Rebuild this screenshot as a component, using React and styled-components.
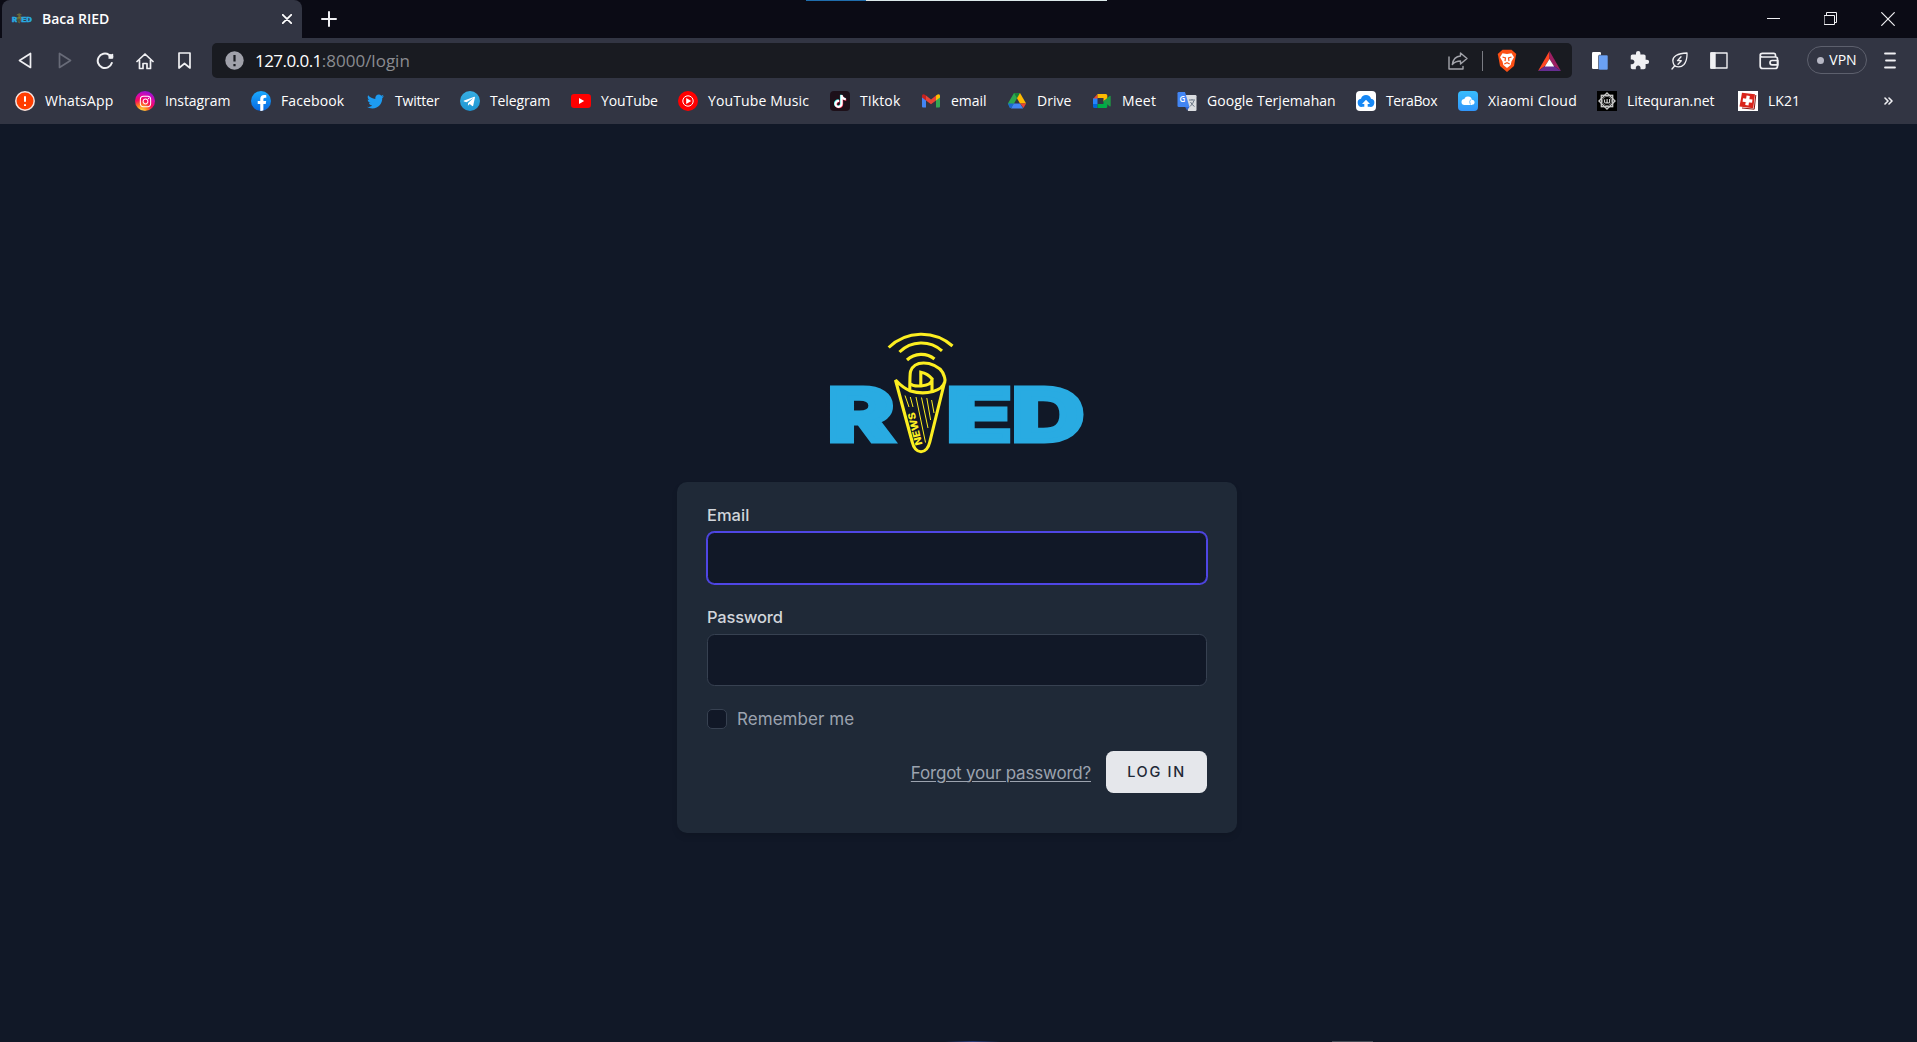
import React from 'react';
import styled, { createGlobalStyle } from 'styled-components';
import { FaTwitter, FaFacebookF, FaTelegramPlane, FaInstagram, FaTiktok } from 'react-icons/fa';
import { MdExtension } from 'react-icons/md';

const ui = '"Open Sans", "Noto Sans", sans-serif';

const GlobalStyle = createGlobalStyle`
  *, *::before, *::after { box-sizing: border-box; }
  body { margin: 0; background: #111827; overflow: hidden; }
`;

const Browser = styled.div`
  display: flex;
  flex-direction: column;
  width: 100%;
  height: 100vh;
  position: relative;
  font-family: ${ui};
  color: #fff;
`;

/* ---------- window chrome ---------- */

const TabStrip = styled.div`
  display: flex;
  height: 38px;
  padding-left: 2px;
  background: #0b0b15;
`;

const Tab = styled.div`
  display: flex;
  align-items: center;
  width: 300px;
  padding: 0 10px 0 10px;
  border-radius: 8px 8px 0 0;
  background: #323543;
`;

const TabTitle = styled.span`
  flex: 1;
  margin-left: 10px;
  font-size: 14px;
  font-weight: 600;
  line-height: 20px;
`;

const Favicon = styled.svg`
  width: 20px;
  height: 12px;
  overflow: visible;
`;

const IconCell = styled.div`
  display: flex;
  flex: none;
  align-items: center;
  justify-content: center;
  width: ${(p) => p.$w || 40}px;
  color: ${(p) => p.$color || '#f0f0f3'};
`;

const Spacer = styled.div`
  flex: 1;
`;

const WindowControls = styled.div`
  display: flex;
  align-items: stretch;
`;

const StripEdge = styled.div`
  position: absolute;
  top: 0;
  left: 806px;
  display: flex;
  height: 1px;
`;

const EdgePart = styled.div`
  width: ${(p) => p.$w}px;
  background: ${(p) => p.$color};
`;

const Toolbar = styled.div`
  display: flex;
  height: 44px;
  padding: 5px 7px 4px 5px;
  background: #323543;
`;

const AddressBar = styled.div`
  display: flex;
  flex: none;
  align-items: center;
  width: 1360px;
  margin: 0 8px 0 7px;
  padding: 0 0 0 13px;
  border-radius: 5px;
  background: #191b21;
`;

const Url = styled.div`
  flex: 1;
  margin-left: 11px;
  font-size: 17px;
  line-height: 24px;
  color: #8a8b90;
`;

const Host = styled.span`
  letter-spacing: -0.55px;
  color: #fff;
`;

const Divider = styled.div`
  width: 1px;
  height: 20px;
  margin: 0 4px;
  background: #7a7c83;
`;

const VpnPill = styled.div`
  display: flex;
  flex: none;
  align-items: center;
  justify-content: center;
  align-self: center;
  gap: 5px;
  width: 60px;
  height: 28px;
  margin: 0 3px 1px 8px;
  border: 1px solid #5d606d;
  border-radius: 14px;
  font-size: 14px;
  line-height: 20px;
`;

const VpnDot = styled.i`
  width: 7px;
  height: 7px;
  border-radius: 50%;
  background: #b6b7c4;
`;

const BookmarkBar = styled.div`
  display: flex;
  align-items: center;
  height: 42px;
  padding: 0 20px 4px 15px;
  background: #323543;
`;

const Bookmark = styled.div`
  display: flex;
  flex: none;
  align-items: center;
  gap: 10px;
  width: ${(p) => p.$w}px;
  font-size: 14px;
  line-height: 20px;
  letter-spacing: ${(p) => p.$ls}px;
  white-space: nowrap;
`;

const Badge = styled.span`
  display: flex;
  flex: none;
  align-items: center;
  justify-content: center;
  width: 20px;
  height: 20px;
  overflow: hidden;
  border-radius: ${(p) => p.$r || '0'};
  background: ${(p) => p.$bg || 'none'};
  color: #fff;
`;

/* ---------- login page ---------- */

const Page = styled.main`
  display: flex;
  flex: 1;
  flex-direction: column;
  align-items: center;
  padding: 205px 3px 0 0;
  background: #111827;
  font-family: Inter, "Liberation Sans", sans-serif;
`;

const Logo = styled.svg`
  width: 260px;
  height: 127px;
  margin-bottom: 27px;
  overflow: visible;
`;

const Card = styled.form`
  width: 560px;
  height: 351px;
  margin-top: -1px;
  padding: 20px 30px;
  border-radius: 10px;
  background: #1f2937;
  box-shadow: 0 4px 7px -1px rgba(0, 0, 0, 0.12);
`;

const Field = styled.div`
  display: flex;
  flex-direction: column;
  gap: 4px;
  height: 82px;
  margin-bottom: 20px;
`;

const Label = styled.label`
  padding-top: 1px;
  font-size: 16.5px;
  font-weight: 500;
  line-height: 25px;
  letter-spacing: ${(p) => p.$ls || 0}px;
  color: #d1d5db;
`;

const Input = styled.input`
  width: 100%;
  height: 52px;
  padding: 10px 15px;
  border: 1px solid ${(p) => (p.$active ? '#4f46e5' : '#374151')};
  border-radius: 7.5px;
  outline: none;
  background: #111827;
  box-shadow: ${(p) => (p.$active ? '0 0 0 1px #4f46e5' : 'none')};
  color: #d1d5db;
`;

const Remember = styled.label`
  display: flex;
  align-items: center;
  gap: 10px;
  height: 25px;
  font-size: 17px;
  letter-spacing: 0.05px;
  color: #9ca3af;
`;

const Check = styled.span`
  width: 20px;
  height: 20px;
  border: 1px solid #374151;
  border-radius: 5px;
  background: #111827;
`;

const Actions = styled.div`
  display: flex;
  align-items: center;
  justify-content: flex-end;
  gap: 15px;
  margin-top: 20px;
`;

const ForgotLink = styled.a`
  padding-top: 2px;
  font-size: 17px;
  line-height: 25px;
  letter-spacing: -0.2px;
  text-decoration: underline;
  text-decoration-thickness: 1px;
  text-underline-offset: 2px;
  color: #9ca3af;
`;

const Submit = styled.button`
  width: 101px;
  height: 42px;
  padding: 0;
  border: 0;
  border-radius: 7.5px;
  background: #e5e7eb;
  font: 500 14.5px/20px Inter, "Liberation Sans", sans-serif;
  letter-spacing: 1.7px;
  color: #1f2937;
`;

const BottomEdge = styled.div`
  position: absolute;
  bottom: 0;
  left: 1332px;
  width: 41px;
  height: 1px;
  background: #454a55;
`;

const BottomGlow = styled(BottomEdge)`
  left: 945px;
  width: 55px;
  background: linear-gradient(90deg, transparent, #2c3c78, transparent);
`;

/* ---------- drawings ---------- */

const Glyph = ({ w = 20, h = w, sw = 1.7, children }) => (
  <svg width={w} height={h} viewBox={`0 0 ${w} ${h}`} fill="none" stroke="currentColor" strokeWidth={sw} strokeLinecap="round" strokeLinejoin="round">
    {children}
  </svg>
);

const LogoShapes = ({ caption = true }) => (
  <>
    <g fill="#29abe2" stroke="#29abe2" strokeWidth="5" strokeMiterlimit="6" fontFamily="Inter, sans-serif" fontWeight="800" fontSize="73.3">
      <text transform="translate(827.8 441.1) scale(1.363 1)">R</text>
      <text transform="translate(946.5 441.1) scale(1.46 1)">E</text>
      <text transform="translate(1011.8 441.1) scale(1.368 1)">D</text>
    </g>
    <g fill="none" stroke="#fcee21" strokeWidth="3.1">
      <path d="M888.7 347.5A47 47 0 0 1 952.5 346" />
      <path d="M899.5 352A31 31 0 0 1 942 350.8" />
      <path d="M907 360A21 21 0 0 1 934.5 359" />
      <path d="M895.5 380L912.2 442Q914.5 451.5 921 451.7Q927.5 451.5 929.8 442L944.6 382Q943 388.5 933 391.5Q922 394.5 910.5 391Q903 388 895.5 380Z" />
      <path d="M944.6 383Q945.5 380 944.5 377Q942 367 929 363.5Q914 361 910.5 371.5Q909.8 374 909.8 391" />
      <path d="M910.5 383.5Q912 386.5 921 386Q932 385 932.2 379Q928 373.5 920.8 372.2V385.5M932 379V391.5" />
      <path strokeWidth="1" d="M905 395.5L909 407M910.3 397L913 407M916 397L925.5 442.5M921.5 397.5L928 428M926.8 398L930.6 420M931.6 400L934 413" />
    </g>
    {caption && (
      <text transform="translate(922.5 444.3) rotate(-104)" fill="#fcee21" fontFamily="Inter, sans-serif" fontWeight="800" fontSize="10" textLength="33.5" lengthAdjust="spacingAndGlyphs">
        NEWS
      </text>
    )}
  </>
);

const WarningIcon = () => (
  <svg width="20" height="20" viewBox="0 0 20 20">
    <circle cx="10" cy="10" r="9.2" fill="#ff3d00" stroke="#f6e5e0" strokeWidth="1.5" />
    <path d="M10 5.3v5.500M10 13.3v1.700" stroke="#fff" strokeWidth="2" />
  </svg>
);

const YouTubeIcon = () => (
  <svg width="20" height="20" viewBox="0 0 20 20">
    <rect y="3" width="20" height="14" rx="3.2" fill="#f00" />
    <path d="M8 7l5.200 3L8 13z" fill="#fff" />
  </svg>
);

const YouTubeMusicIcon = () => (
  <svg width="20" height="20" viewBox="0 0 20 20">
    <circle cx="10" cy="10" r="10" fill="#f00" />
    <circle cx="10" cy="10" r="5.2" fill="none" stroke="#fff" strokeWidth="1" />
    <path d="M8.200 7l5 3-5 3z" fill="#fff" />
  </svg>
);

const GmailIcon = () => (
  <svg width="20" height="20" viewBox="0 0 20 20">
    <path d="M1 5v10.500q0 1 1 1h3V8z" fill="#4285f4" />
    <path d="M19 5v10.500q0 1-1 1h-3V8z" fill="#34a853" />
    <path d="M15 4.600v4.900l4-3V5q0-2.500-2.400-1.600z" fill="#fbbc04" />
    <path d="M5 4.600v4.900L1 6.500V5q0-2.500 2.400-1.600z" fill="#c5221f" />
    <path d="M5 4.600l5 3.800 5-3.800v4.900l-5 3.800-5-3.800z" fill="#ea4335" />
  </svg>
);

const DriveIcon = () => (
  <svg width="20" height="20" viewBox="0 0 20 20">
    <path d="M7 2h6l-3 5.300-5 8.800-2 1L.9 12.500z" fill="#2da94f" />
    <path d="M7 2h6l-3 5.300z" fill="#188038" />
    <path d="M13 2l6.100 10.500H13L10 7.300z" fill="#ffba00" />
    <path d="M13 12.500h6.100L16.500 17z" fill="#ea4335" />
    <path d="M6.800 12.500H13l3.200 5H4z" fill="#4285f4" />
    <path d="M.9 12.500h5.900L4 17.300q-1 0-1.500-1z" fill="#1967d2" />
  </svg>
);

const MeetIcon = () => (
  <svg width="20" height="20" viewBox="0 0 20 20">
    <path d="M5.500 3v5H1z" fill="#ea4335" />
    <path d="M1 7.500h4.500v6H1z" fill="#2684fc" />
    <path d="M1 13h4.500v4H2.500Q1 17 1 15.500z" fill="#0066da" />
    <path d="M5.500 3h8.300q1.500 0 1.500 1.500V8l-3.800 2.500V7h-6z" fill="#ffba00" />
    <path d="M5.500 13h6v-3l3.800-2v7.500q0 1.500-1.500 1.500H5.500z" fill="#00ac47" />
    <path d="M11.500 10.200l6-5.300q1.200-.7 1.200.6v9.200q0 1.200-1.200.6z" fill="#1e9a45" />
  </svg>
);

const TranslateIcon = () => (
  <svg width="20" height="20" viewBox="0 0 20 20">
    <path d="M8 4h10.300q1.200 0 1.200 1.200v13.600q0 1.200-1.200 1.200H11z" fill="#dadce0" />
    <path d="M12 9h6M15 8v1M13 15.500q3-2.500 4-6M13.500 11q1.500 3 4 4.500" stroke="#6b7685" fill="none" />
    <path d="M1.800 1H8l4.500 15H1.800Q.5 16 .5 14.800V2.200Q.5 1 1.800 1z" fill="#4285f4" />
    <path d="M8.200 16h4.300L10 19.500z" fill="#3367d6" />
    <text x="2.500" y="11.300" fontSize="8" fontWeight="600" fontFamily="Open Sans, sans-serif" fill="#fff">G</text>
  </svg>
);

const TeraBoxIcon = () => (
  <svg width="20" height="20" viewBox="0 0 20 20">
    <path d="M6.500 15.800A4 4 0 0 1 5 7.800a5.200 5.200 0 0 1 10 0 4 4 0 0 1-1.500 8z" fill="#1788f5" />
    <path d="M10 8.700l4 4.300h-2.300v3.500H8.300V13H6z" fill="#fff" />
  </svg>
);

const XiaomiCloudIcon = () => (
  <svg width="20" height="20" viewBox="0 0 20 20" fill="#fff">
    <circle cx="6.500" cy="11" r="3" />
    <circle cx="10" cy="9.300" r="3.800" />
    <circle cx="14" cy="11.200" r="2.500" />
    <path d="M6 10h8v4H6z" />
    <path d="M12.700 8.500q-2 2-.3 5" stroke="#35a8fb" strokeWidth=".7" fill="none" />
  </svg>
);

const QuranIcon = () => (
  <svg width="20" height="20" viewBox="0 0 20 20" fill="none" stroke="#c9c9c9">
    <rect x="4.300" y="4.300" width="11.400" height="11.400" strokeWidth="1.300" />
    <rect x="4.300" y="4.300" width="11.400" height="11.400" strokeWidth="1.300" transform="rotate(45 10 10)" />
    <circle cx="10" cy="10" r="4.600" fill="#000" strokeWidth=".6" />
    <path d="M7.500 8.500v2q0 1.500 1.300 1.500t1.300-1.500v-2.500M10.100 10.500q0 1.500 1.300 1.500t1.200-1.500V8" strokeWidth="1.200" />
  </svg>
);

const CrossIcon = () => (
  <svg width="20" height="20" viewBox="0 0 20 20">
    <path d="M4 1.800l13 1.500-1.800 14L1.500 15.500z" fill="#d9241b" />
    <path d="M17.800 4l-1.600 14.200L4 17" stroke="#8d130e" fill="none" />
    <path d="M10.200 4.800l-1.300 9.500M4.800 9l9.500 1.200" stroke="#fff" strokeWidth="3.300" />
  </svg>
);

const bookmarks = [
  { label: 'WhatsApp', w: 120, ls: 0.2, icon: <Badge><WarningIcon /></Badge> },
  { label: 'Instagram', w: 116, ls: -0.08, icon: <Badge $r="50%" $bg="radial-gradient(circle at 30% 105%, #ffd44a 8%, #ff8a1e 25%, #f80a5a 48%, #d60bb0 68%, #7014e8 95%)"><FaInstagram size={13} /></Badge> },
  { label: 'Facebook', w: 114, ls: 0.1, icon: <Badge $r="50%" $bg="linear-gradient(#1aaaff, #0867e0)"><svg width="20" height="20"><FaFacebookF x="3" y="4" size={16} /></svg></Badge> },
  { label: 'Twitter', w: 95, ls: -0.2, icon: <Badge><FaTwitter size={17} color="#1d9bf0" /></Badge> },
  { label: 'Telegram', w: 111, ls: -0.12, icon: <Badge $r="50%" $bg="linear-gradient(#37aee2, #1e96d3)"><svg width="20" height="20"><FaTelegramPlane x="2.800" y="4" size={13} /></svg></Badge> },
  { label: 'YouTube', w: 107, ls: -0.1, icon: <Badge><YouTubeIcon /></Badge> },
  { label: 'YouTube Music', w: 152, ls: 0.13, icon: <Badge><YouTubeMusicIcon /></Badge> },
  { label: 'TIktok', w: 91, ls: 0.1, icon: <Badge $r="4px" $bg="#1d1019"><svg width="20" height="20"><FaTiktok x="3.100" y="3.600" size={13} color="#29e6e0" /><FaTiktok x="4.100" y="4.400" size={13} color="#fb2c55" /><FaTiktok x="3.600" y="4" size={13} /></svg></Badge> },
  { label: 'email', w: 86, ls: -0.05, icon: <Badge><GmailIcon /></Badge> },
  { label: 'Drive', w: 85, ls: 0, icon: <Badge><DriveIcon /></Badge> },
  { label: 'Meet', w: 85, ls: 0.2, icon: <Badge><MeetIcon /></Badge> },
  { label: 'Google Terjemahan', w: 179, ls: 0.04, icon: <Badge><TranslateIcon /></Badge> },
  { label: 'TeraBox', w: 102, ls: -0.4, icon: <Badge $r="4px" $bg="#fff"><TeraBoxIcon /></Badge> },
  { label: 'Xiaomi Cloud', w: 139, ls: 0.26, icon: <Badge $r="4px" $bg="linear-gradient(#38bdfc, #3095fa)"><XiaomiCloudIcon /></Badge> },
  { label: 'Litequran.net', w: 141, ls: -0.04, icon: <Badge $bg="#000"><QuranIcon /></Badge> },
  { label: 'LK21', w: 80, ls: 0, icon: <Badge $bg="#fff"><CrossIcon /></Badge> },
];

export default function App() {
  return (
    <Browser>
      <GlobalStyle />
      <TabStrip>
        <Tab>
          <Favicon viewBox="827 329 260 143"><LogoShapes caption={false} /></Favicon>
          <TabTitle>Baca RIED</TabTitle>
          <Glyph w={10} sw={1.8}><path d="M.8.8l8.400 8.400M9.200.8L.8 9.200" /></Glyph>
        </Tab>
        <IconCell $w={54}><Glyph w={16} sw={2}><path d="M8 1v14M1 8h14" /></Glyph></IconCell>
        <Spacer />
        <WindowControls>
          <IconCell $w={57}><Glyph w={13} sw={1}><path d="M0 5.500h13" /></Glyph></IconCell>
          <IconCell $w={57}><Glyph w={13} h={14} sw={1}><path d="M.5 3.500h10v9h-10zM2.500 3.500v-3h10v10h-2" /></Glyph></IconCell>
          <IconCell $w={58}><Glyph w={14} sw={1.2}><path d="M.7.700l12.600 12.600M13.300.700L.7 13.300" /></Glyph></IconCell>
        </WindowControls>
        <StripEdge>
          <EdgePart $w={60} $color="#1f6dac" />
          <EdgePart $w={241} $color="#dce9ea" />
        </StripEdge>
      </TabStrip>

      <Toolbar>
        <IconCell><Glyph w={14} h={17}><path d="M12.500 1.500v14L1.500 8.500z" /></Glyph></IconCell>
        <IconCell $color="#686b78"><Glyph w={14} h={17}><path d="M1.500 1.500v14l11-7z" /></Glyph></IconCell>
        <IconCell>
          <Glyph w={18} sw={2}>
            <path d="M13 2.900A7.200 7.200 0 1 0 15.800 11" />
            <circle cx="14.8" cy="4.3" r="2.3" fill="currentColor" stroke="none" />
            <path d="M13 6h3.500V2.500" strokeWidth="1.5" />
          </Glyph>
        </IconCell>
        <IconCell $w={39}><Glyph w={18}><path d="M1 9.500L9 2l8 7.500M3.500 8v8.500H7V11.500h4v5h3.500V8" /></Glyph></IconCell>
        <IconCell $w={41}><Glyph w={13} h={17}><path d="M1 1h11v15l-5.500-4.500L1 16z" /></Glyph></IconCell>
        <AddressBar>
          <svg width="19" height="19" viewBox="0 0 19 19">
            <circle cx="9.5" cy="9.5" r="9.2" fill="#a0a1aa" />
            <path d="M9.500 4v6.500M9.500 13v2.200" stroke="#191b21" strokeWidth="2.2" />
          </svg>
          <Url><Host>127.0.0.1</Host>:8000/login</Url>
          <IconCell $color="#a3a4ab">
            <Glyph w={20} h={18} sw={1.4}>
              <path d="M1 5v12h14v-2.500" />
              <path d="M12.500 1l6.500 5.500-6.500 5.500V9q-5 0-8.200 3.500Q5.500 4.500 12.500 4z" />
            </Glyph>
          </IconCell>
          <Divider />
          <IconCell>
            <svg width="20" height="23" viewBox="0 0 20 23">
              <path d="M10 .8L14.500.8 19.300 5l-.5 2L17 17l-7 6-7-6L1.200 7l-.5-2L5.500.8z" fill="#fb4f14" />
              <path d="M5.500 4.300l4.500.8 4.500-.8L17 8.300l-2.500 4.200-.8 3.500-3.700 3-3.700-3-.8-3.500L3 8.300z" fill="#fff" />
              <path d="M5.500 8l3 1-.5 3.200M14.500 8l-3 1 .5 3.200M7.300 15L10 13.700l2.700 1.300" fill="none" stroke="#fb4f14" strokeWidth="1.2" />
            </svg>
          </IconCell>
          <IconCell $w={45}>
            <svg width="23" height="20" viewBox="0 0 23 20">
              <path d="M11.500 0L0 20l7-5 4.500-7z" fill="#ff4724" />
              <path d="M11.500 0L23 20l-7-5-4.500-7z" fill="#9e1f63" />
              <path d="M0 20h23l-7-5H7z" fill="#662d91" />
              <path d="M11.500 8l4.700 7.500H6.800z" fill="#fff" />
            </svg>
          </IconCell>
        </AddressBar>
        <IconCell>
          <svg width="16" height="18" viewBox="0 0 16 18">
            <rect width="9" height="17" rx="1.2" fill="#fff" />
            <rect x="6.5" y="3" width="9.5" height="15" rx="1.2" fill="#6ba1f4" stroke="#323543" strokeWidth=".6" />
          </svg>
        </IconCell>
        <IconCell $w={39}><MdExtension size={21} /></IconCell>
        <IconCell>
          <Glyph w={17} h={18} sw={1.3}>
            <path d="M1 17l3-3.500M3.500 13.800Q-.5 7 5 3.500 9 1.200 16 1q.3 7.500-3 11.500-4 4-9.500 1.300z" />
            <path d="M10 4.800L6.500 8.700h3.800L7 12.200" />
          </Glyph>
        </IconCell>
        <IconCell>
          <Glyph w={18} h={17} sw={1.4}>
            <path d="M1 1h16v15H1z" />
            <path d="M1 1h4v15H1z" fill="currentColor" />
          </Glyph>
        </IconCell>
        <IconCell $w={60}>
          <Glyph w={20} h={18}>
            <path d="M1.200 4.500v9.500q0 2.500 2.500 2.500h12.500q2.300 0 2.300-2.500V7q0-2-2-2H3.500Q1.200 5 1.200 3.200T3.500 1.300H15q1.500 0 1.500 1.700v1.500" />
            <path d="M18.800 8.500h-5.600q-2.200 0-2.200 2.200t2.200 2.200h5.600z" />
          </Glyph>
        </IconCell>
        <VpnPill><VpnDot />VPN</VpnPill>
        <IconCell><Glyph w={12} h={17} sw={1.8}><path d="M1 1.500h10M2 8.500h9M1 15.500h10" /></Glyph></IconCell>
      </Toolbar>

      <BookmarkBar>
        {bookmarks.map((b) => (
          <Bookmark key={b.label} $w={b.w} $ls={b.ls}>{b.icon}{b.label}</Bookmark>
        ))}
        <Spacer />
        <IconCell $w={18}><Glyph w={9} h={8} sw={1.6}><path d="M1 1l3 3-3 3M5 1l3 3-3 3" /></Glyph></IconCell>
      </BookmarkBar>

      <Page>
        <Logo viewBox="827 329 260 127"><LogoShapes /></Logo>
        <Card>
          <Field>
            <Label>Email</Label>
            <Input $active type="email" />
          </Field>
          <Field>
            <Label $ls={-0.2}>Password</Label>
            <Input type="password" />
          </Field>
          <Remember><Check />Remember me</Remember>
          <Actions>
            <ForgotLink>Forgot your password?</ForgotLink>
            <Submit type="button">LOG IN</Submit>
          </Actions>
        </Card>
      </Page>
      <BottomGlow />
      <BottomEdge />
    </Browser>
  );
}
